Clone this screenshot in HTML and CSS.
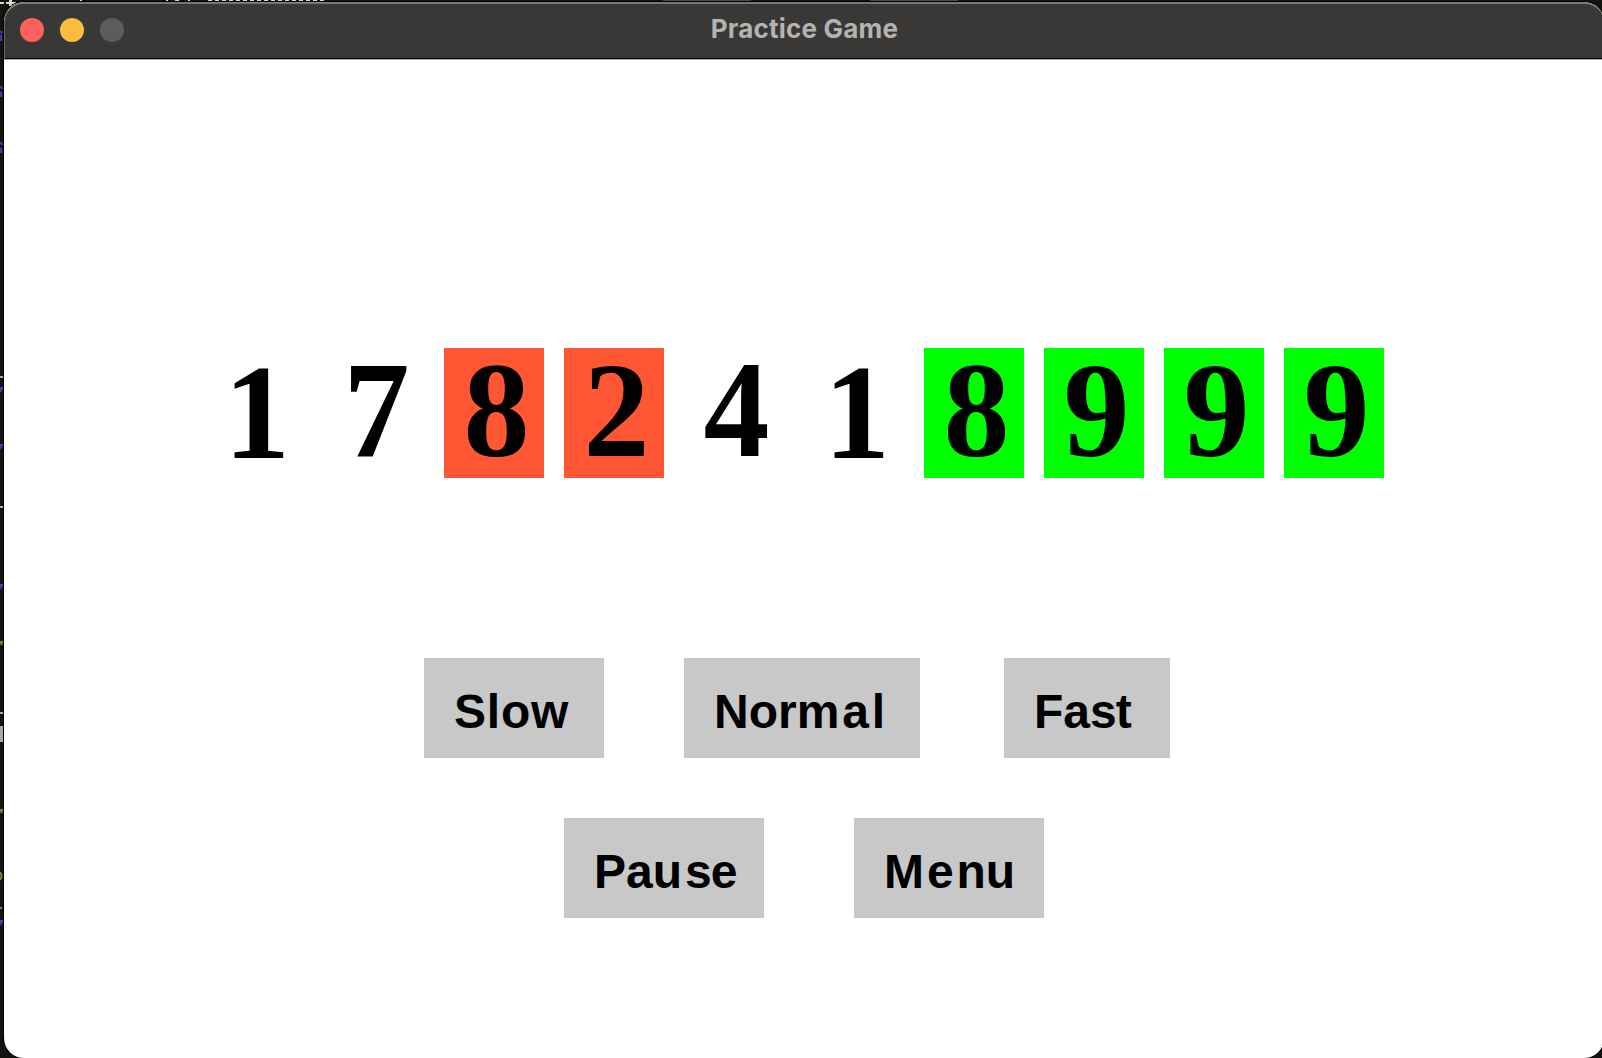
FILE: index.html
```html
<!DOCTYPE html>
<html lang="en">
<head>
<meta charset="utf-8">
<title>Practice Game</title>
<link rel="stylesheet" href="styles.css">
</head>
<body>
<svg class="backdrop" width="1602" height="1058" aria-hidden="true">
  <!-- slivers of the editor behind the window -->
  <path fill="#4d4d48" d="M663 0h88v1h-88zM870 0h88v1h-88z"/>
  <g fill="#d8d8d4">
    <path d="M0 2h4v2H0zM6 2h10v2H6zM9 0h3v6H9zM80 0h2v1h-2zM166 0h2v1h-2zM175 0h4v1h-4zM188 0h2v1h-2z"/>
    <path d="M208 .5H324" stroke="#d8d8d4" stroke-dasharray="4 3"/>
    <path fill="#aaa9a5" d="M0 376h3v2H0zM0 506h3v2H0zM0 712h3v2H0zM0 726h3v16H0z"/>
  </g>
  <g fill="none" stroke="#5038b8" stroke-width="2">
    <path d="M0 31.500q2 0 2 2M0 35q2 1 1 5h-1M0 87q2 0 2 2M0 92q2 1 1 4h-1M0 143q2 0 2 2M0 148q2 1 1 4h-1"/>
    <path d="M0 388h2l-2 4M0 445h2l-2 4M0 585h2l-2 4M0 921h2l-2 4"/>
  </g>
  <g fill="none" stroke="#8c832e" stroke-width="2"><path d="M0 642h2l-1 3M0 810h2l-1 3M0 908h2"/><path d="M0 872q3 4 0 8"/></g>
</svg>
<main class="window">
  <header class="titlebar">
    <div class="lights"><i class="light close"></i><i class="light minimize"></i><i class="light zoom"></i></div>
    <h1 class="title">Practice Game</h1>
  </header>
  <section class="game">
    <div class="digits">
      <div class="digit"><b class="one">1</b></div>
      <div class="digit"><b class="flat">7</b></div>
      <div class="digit wrong"><b>8</b></div>
      <div class="digit wrong"><b class="two">2</b></div>
      <div class="digit"><b class="flat">4</b></div>
      <div class="digit"><b class="one">1</b></div>
      <div class="digit right"><b>8</b></div>
      <div class="digit right"><b>9</b></div>
      <div class="digit right"><b>9</b></div>
      <div class="digit right"><b>9</b></div>
    </div>
    <div class="speeds">
      <button class="btn slow">Slow</button>
      <button class="btn normal">Nor<span class="loose">ma</span>l</button>
      <button class="btn fast">Fa<span class="tight">s</span>t</button>
    </div>
    <div class="actions">
      <button class="btn pause">Pa<span class="loose">u</span><span class="tight">s</span>e</button>
      <button class="btn menu"><span class="loose">Me</span>nu</button>
    </div>
  </section>
</main>
</body>
</html>
```
FILE: styles.css
```css
* { box-sizing: border-box; }
html { background: #151310; }
html, body { margin: 0; width: 1602px; height: 1058px; overflow: hidden; }
body { padding: 2px 0 0 4px; }
.backdrop { position: absolute; left: 0; top: 0; z-index: -1; }
.window {
  width: 1600px; height: 1056px; border-radius: 20px; overflow: hidden;
  background: #fff; box-shadow: 0 0 0 1px #000;
}
.titlebar {
  display: grid; grid-template-columns: 1fr auto 1fr; align-items: center;
  height: 58px; padding-bottom: 3px; background: #3a3836;
  border-top: 2px solid #777673; border-left: 1px solid #686764; border-bottom: 1px solid #aaa;
  border-radius: 20px 20px 0 0;
  box-shadow: inset 0 -1px #000;
}
.lights { display: flex; gap: 16px; padding-left: 15px; }
.light { width: 24px; height: 24px; border-radius: 50%; }
.close { background: #ff605c; }
.minimize { background: #fdbb40; }
.zoom { background: #5d5c5a; }
.title { margin: 0 0 2px; font: 700 26px/32px Inter, sans-serif; letter-spacing: 0.2px; color: #b5b3b1; }
.game { padding-top: 288px; }
.digits { display: flex; gap: 20px; padding-left: 200px; }
.digit {
  width: 100px; height: 130px; padding-left: 19px;
  font: 700 132px/130px "Liberation Serif", serif; color: #000;
}
/* transforms scale about the baseline, 110px down the tile */
.digit b { display: block; transform-origin: 0 110px; transform: translate(0.5px, -0.5px) scaleY(1.03); }
.digit .flat { transform: translate(0.5px, -0.5px) scaleY(1.036); }
.digit .two { transform: translate(0.5px, -0.5px) scaleY(1.026); }
.digit .one { transform: translate(1px, 1px) scaleY(1.025); }
.wrong { background: #ff5733; }
.right { background: #0f0; }
.speeds, .actions { display: flex; }
.speeds { padding: 180px 0 0 420px; }
.actions { padding: 60px 0 0 560px; }
.btn {
  height: 100px; padding: 7px 0 0 30px; border: 0; background: #c8c8c8; color: #000; text-align: left;
  font: 700 48px/93px "Liberation Sans", sans-serif; white-space: nowrap;
}
.loose { letter-spacing: 2.9px; }
.tight { letter-spacing: -1px; }
.slow { width: 180px; margin-right: 80px; letter-spacing: 0.8px; }
.normal { width: 236px; margin-right: 84px; }
.fast { width: 166px; }
.pause { width: 200px; margin-right: 90px; }
.menu { width: 190px; }
```
